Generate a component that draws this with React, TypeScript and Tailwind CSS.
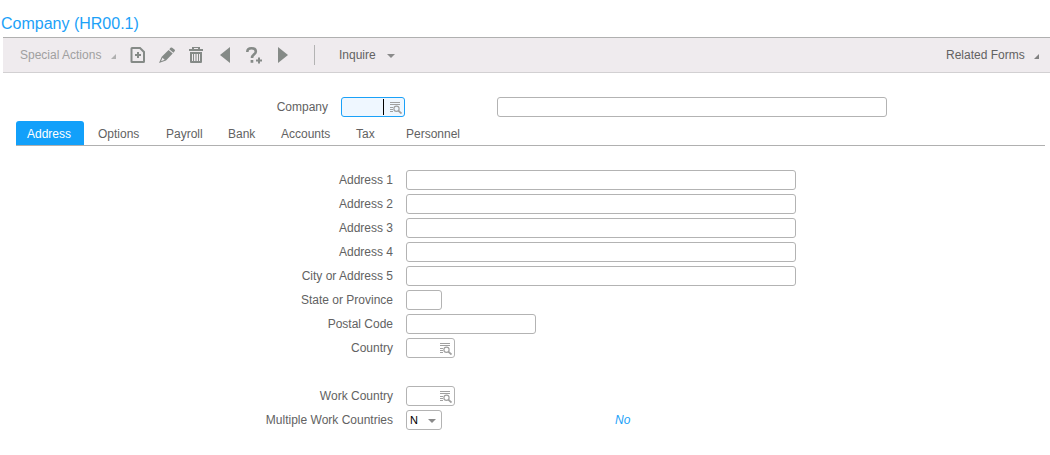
import React, { useState } from "react";

const tabs = [
  { name: "Address", width: "w-[68px]" },
  { name: "Options", width: "w-[65px]" },
  { name: "Payroll", width: "w-[59px]" },
  { name: "Bank", width: "w-[50px]" },
  { name: "Accounts", width: "w-[72px]" },
  { name: "Tax", width: "w-[47px]" },
  { name: "Personnel", width: "w-[80px]" },
];

const inputStyle = "h-5 rounded-[3px] border border-[#b3b3b3] bg-white px-1 text-xs text-black outline-none";

const CornerArrow = ({ className }: { className: string }) => (
  <svg viewBox="0 0 5 5" className={`w-[5px] h-[5px] ${className}`} fill="currentColor" aria-hidden="true">
    <path d="M5 0V5H0Z" />
  </svg>
);

const DownArrow = ({ className = "" }: { className?: string }) => (
  <svg viewBox="0 0 8 4" className={`w-2 h-1 ${className}`} fill="currentColor" aria-hidden="true">
    <path d="M0 0H8L4 4Z" />
  </svg>
);

const AddIcon = () => (
  <svg viewBox="0 0 16 16" className="w-4 h-4" aria-hidden="true">
    <path d="M2 1H10L14 5V14.500a.5.5 0 0 1-.5.5H2a.5.5 0 0 1-.5-.5V1.500A.5.5 0 0 1 2 1Z" fill="none" stroke="currentColor" strokeWidth="2" />
    <path d="M7 5H9V7H11V9H9V11H7V9H5V7H7Z" fill="currentColor" />
  </svg>
);

const EditIcon = () => (
  <svg viewBox="0 0 16 16" className="w-4 h-4" fill="currentColor" aria-hidden="true">
    <path d="M11.500.8a1.300 1.300 0 0 1 1.700-.1L15.500 2.600a1.200 1.200 0 0 1 .1 1.700L14.400 5.700 10.300 2.200Z" />
    <path d="M9.600 3 13.700 6.500 7 13.500 0 16 2.700 9.700ZM3.500 10.800 2 14.200 5.700 12.800Z" fillRule="evenodd" />
  </svg>
);

const TrashIcon = () => (
  <svg viewBox="0 0 16 16" className="w-4 h-4" aria-hidden="true">
    <path d="M4 0H12V2H15V4H1V2H4ZM6 1V2H10V1Z" fill="currentColor" fillRule="evenodd" />
    <path d="M2 5H14V15a1 1 0 0 1-1 1H3a1 1 0 0 1-1-1ZM4 7V14H5V7ZM6 7V14H7.500V7ZM8.500 7V14H10V7ZM11 7V14H12V7Z" fill="currentColor" fillRule="evenodd" />
  </svg>
);

const HelpIcon = () => (
  <svg viewBox="0 0 17 17" className="w-[17px] h-[17px]" aria-hidden="true">
    <path d="M1.300 5C1.300 2.700 3 1.300 5.500 1.300S9.800 2.700 9.800 4.700C9.800 7.300 6 7.500 6 11" fill="none" stroke="currentColor" strokeWidth="2.600" />
    <path d="M4.600 13H7.300V15.700H4.600ZM12 10.500H14V12.500H16V14.500H14V16.500H12V14.500H10V12.500H12Z" fill="currentColor" />
  </svg>
);

const LookupIcon = () => (
  <svg viewBox="0 0 13 13" className="w-[13px] h-[13px]" fill="none" stroke="currentColor" aria-hidden="true">
    <path d="M1 1.500H11M1 3.500H11M1 6.500H4M1 8.500H4M1 10.500H4" />
    <circle cx="7.500" cy="7.700" r="2.600" strokeWidth="1.200" />
    <path d="M9.300 9.600 12.500 12.500" strokeWidth="1.800" />
  </svg>
);

const LookupField = ({ id, label, active }: { id: string; label: string; active?: boolean }) => (
  <div className="relative flex">
    <input
      id={id}
      type="text"
      className={
        active
          ? "h-5 w-16 rounded-[3px] border border-[#1ba1f8] bg-[#eff7ff] pl-1 pr-5 text-xs text-black outline-none"
          : `${inputStyle} w-[49px]`
      }
    />
    {active && <span className="absolute right-[21px] top-[2px] h-4 w-px bg-black" />}
    <button type="button" aria-label={`Look up ${label}`} className="absolute right-[3px] top-1 text-[#a0a0a0]">
      <LookupIcon />
    </button>
  </div>
);

const Field = ({ id, label, children }: { id: string; label: string; children: React.ReactNode }) => (
  <div className="flex h-5 items-center">
    <label htmlFor={id} className="w-[393px] shrink-0 text-right">{label}</label>
    <div className="ml-[13px] flex min-w-0 flex-1 items-center">{children}</div>
  </div>
);

const TextField = ({ id, label, width }: { id: string; label: string; width: string }) => (
  <Field id={id} label={label}>
    <input id={id} type="text" className={`${inputStyle} ${width}`} />
  </Field>
);

export default function App() {
  const [tab, setTab] = useState("Address");
  const [multiple, setMultiple] = useState("N");

  return (
    <main className="bg-white pt-[11px] font-['Liberation_Sans',Arial,sans-serif] text-xs text-[#626262]">
      <h1 className="mb-px pl-px text-base leading-[25px] text-[#1ba1f8]">Company (HR00.1)</h1>

      {/* Toolbar */}
      <header className="ml-[3px] flex h-9 items-center border-b border-t border-b-[#d2d0d2] border-t-[#b0b0b0] bg-[#efebee] pr-[11px]">
        <button type="button" className="ml-[17px] flex w-24 items-center justify-between text-[#a0a0a0]">
          Special Actions
          <CornerArrow className="mt-[2px] text-[#b0b0b0]" />
        </button>
        <div className="ml-[14px] flex items-center text-[#858a87]">
          <button type="button" aria-label="Add" className="w-[29px]"><AddIcon /></button>
          <button type="button" aria-label="Change" className="w-[29px]"><EditIcon /></button>
          <button type="button" aria-label="Delete" className="w-8"><TrashIcon /></button>
          <button type="button" aria-label="Previous" className="w-[26px]">
            <svg viewBox="0 0 10 16" className="h-4 w-[10px]" fill="currentColor"><path d="M10 0V16L0 8Z" /></svg>
          </button>
          <button type="button" aria-label="Inquire" className="w-8"><HelpIcon /></button>
          <button type="button" aria-label="Next" className="w-9">
            <svg viewBox="0 0 10 16" className="h-4 w-[10px]" fill="currentColor"><path d="M0 0V16L10 8Z" /></svg>
          </button>
        </div>
        <div className="h-5 w-px bg-[#b3b3b3]" />
        <button type="button" className="ml-6 flex w-14 items-center justify-between">
          Inquire
          <DownArrow className="mt-[2px] text-[#8a8a8a]" />
        </button>
        <button type="button" className="ml-auto flex w-[93px] items-center justify-between">
          Related Forms
          <CornerArrow className="mt-[2px] text-[#808080]" />
        </button>
      </header>

      {/* Key fields */}
      <div className="mt-6 flex h-5 items-center">
        <label htmlFor="company" className="w-[328px] shrink-0 text-right">Company</label>
        <div className="ml-[13px]"><LookupField id="company" label="Company" active /></div>
        <input type="text" aria-label="Company name" className={`${inputStyle} ml-[92px] w-[390px]`} />
      </div>

      <div role="tablist" className="ml-4 mr-[5px] mt-1 flex gap-[3px] border-b border-[#b0b0b0]">
        {tabs.map(({ name, width }) => (
          <button
            key={name}
            type="button"
            role="tab"
            aria-selected={tab === name}
            onClick={() => setTab(name)}
            className={`h-6 rounded-t-[3px] pl-[11px] pt-[2px] text-left ${width} ${tab === name ? "bg-[#12a0fa] text-white" : ""}`}
          >
            {name}
          </button>
        ))}
      </div>

      {/* Address tab */}
      <form className="mt-6 flex flex-col gap-1">
        <TextField id="addr1" label="Address 1" width="w-[390px]" />
        <TextField id="addr2" label="Address 2" width="w-[390px]" />
        <TextField id="addr3" label="Address 3" width="w-[390px]" />
        <TextField id="addr4" label="Address 4" width="w-[390px]" />
        <TextField id="city" label="City or Address 5" width="w-[390px]" />
        <TextField id="state" label="State or Province" width="w-9" />
        <TextField id="postal" label="Postal Code" width="w-[130px]" />
        <Field id="country" label="Country">
          <LookupField id="country" label="Country" />
        </Field>
        <div className="mt-6">
          <Field id="work-country" label="Work Country">
            <LookupField id="work-country" label="Work Country" />
          </Field>
        </div>
        <Field id="multiple" label="Multiple Work Countries">
          <div className="relative">
            <select
              id="multiple"
              value={multiple}
              onChange={(e) => setMultiple(e.target.value)}
              className="block h-5 w-9 appearance-none rounded-[3px] border border-[#b3b3b3] bg-white pl-[3px] text-[11px] text-black outline-none"
            >
              <option>N</option>
              <option>Y</option>
            </select>
            <DownArrow className="pointer-events-none absolute right-[6px] top-[9px] text-[#8a8a8a]" />
          </div>
          <output htmlFor="multiple" className="ml-[173px] italic text-[#1ba1f8]">
            {multiple === "N" ? "No" : "Yes"}
          </output>
        </Field>
      </form>
    </main>
  );
}
